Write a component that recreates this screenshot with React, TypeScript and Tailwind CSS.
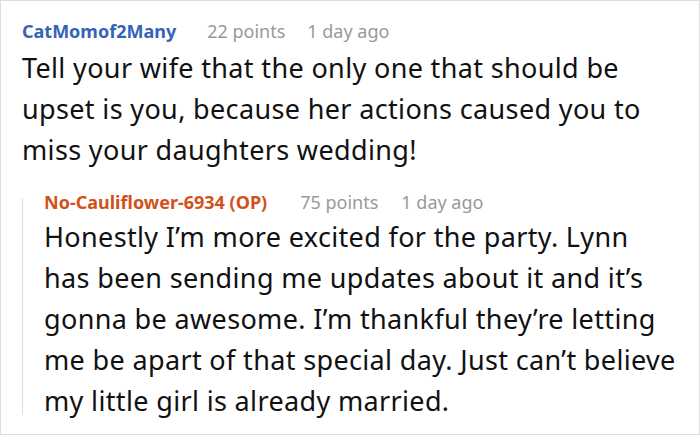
import React from 'react';

interface MetaProps {
  author: string;
  authorClass: string;
  points: number;
  age: string;
  wide?: boolean;
}

const Meta: React.FC<MetaProps> = ({ author, authorClass, points, age, wide }) => (
  <div className="flex items-center text-[18px] leading-[24px]">
    <span className={`font-bold ${authorClass}`}>{author}</span>
    <span className={`${wide ? 'ml-[33px]' : 'ml-[31px]'} text-[#999999]`}>{points} points</span>
    <span className={`${wide ? 'ml-[23px]' : 'ml-[22px]'} text-[#999999]`}>{age}</span>
  </div>
);

const bodyText = 'whitespace-nowrap text-[27px] leading-[41px] tracking-[0.35px] text-[#111111]';

export default function App() {
  return (
    <div className="h-[436px] w-[700px] bg-white" style={{ fontFamily: '"Noto Sans", "Open Sans", sans-serif' }}>
      <div className="h-[435px] w-[700px] border border-[#dddddd] pl-[21px] pt-[18px]">
        <Meta author="CatMomof2Many" authorClass="text-[#3563b8]" points={22} age="1 day ago" />
        <p className={`mt-[4px] ${bodyText}`}>
          Tell your wife that the only one that should be
          <br />
          upset is you, because her actions caused you to
          <br />
          miss your daughters wedding!
        </p>

        {/* reply, with the thread line on its left */}
        <div className="mt-[18px] flex">
          <div className="mb-[6px] mt-[10px] w-px shrink-0 bg-[#dddddd]" />
          <div className="pl-[21px] pt-[2px]">
            <Meta author="No-Cauliflower-6934 (OP)" authorClass="text-[#d2511b]" points={75} age="1 day ago" wide />
            <p className={`mt-[2px] ${bodyText}`}>
              Honestly I’m more excited for the party. Lynn
              <br />
              has been sending me updates about it and it’s
              <br />
              gonna be awesome. I’m thankful they’re letting
              <br />
              me be apart of that special day. Just can’t believe
              <br />
              my little girl is already married.
            </p>
          </div>
        </div>
      </div>
    </div>
  );
}
